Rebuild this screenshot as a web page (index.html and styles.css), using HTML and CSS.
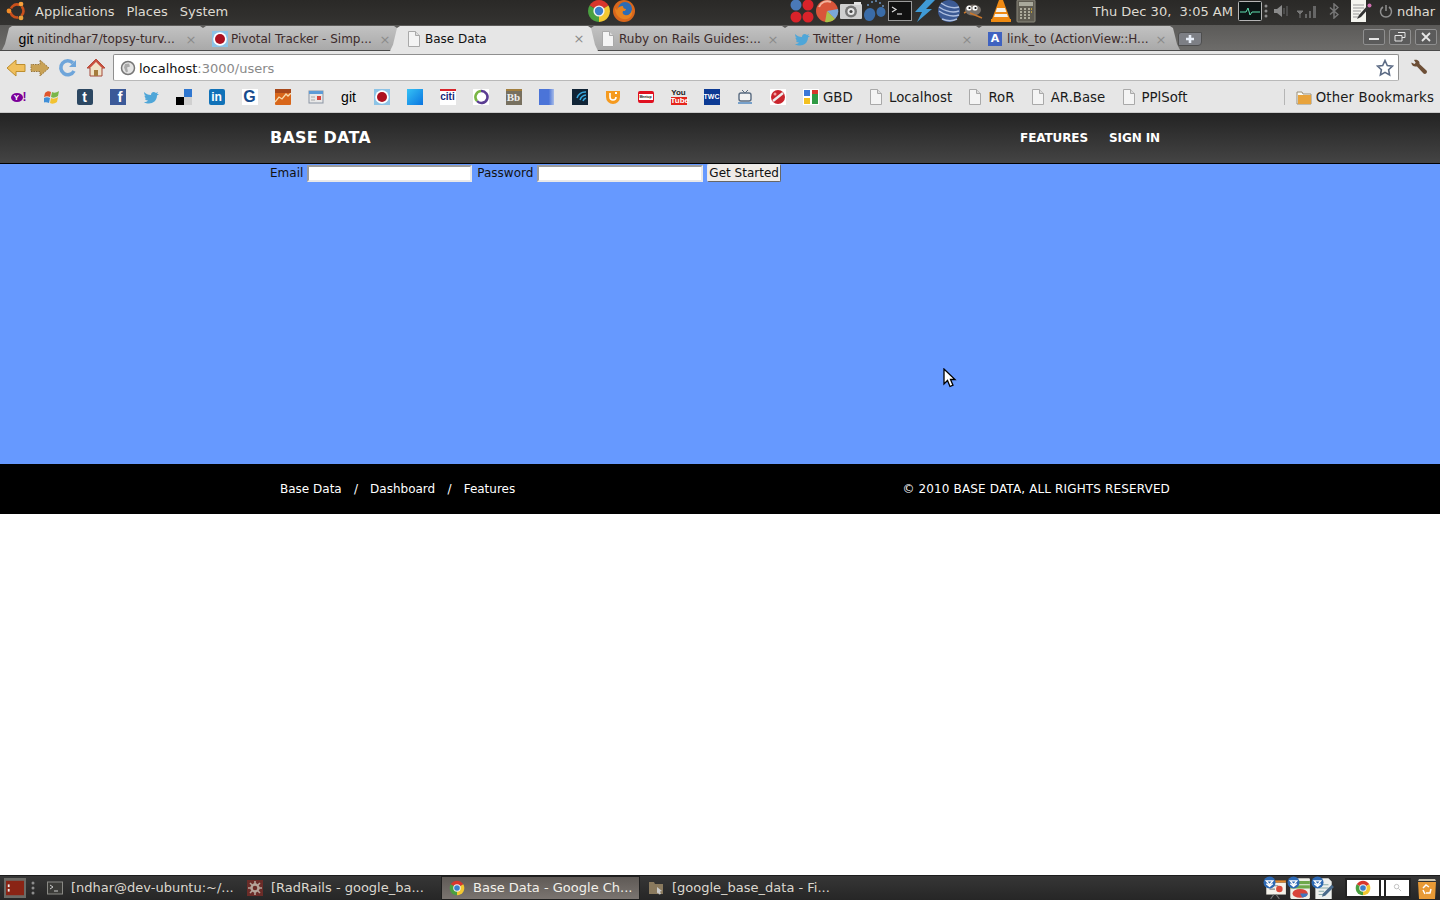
FILE: index.html
```html
<!DOCTYPE html>
<html lang="en">
<head>
    <meta charset="UTF-8">
    <title>Base Data - Google Chrome</title>
    <link rel="stylesheet" href="styles.css">
</head>
<body>
<svg class="defs">
    <symbol id="page" viewBox="0 0 16 16"><path d="M2.500.5h7l4 4v11h-11z" fill="#f4f4f4" stroke="#a9a9a9"/><path d="M9.500.5v4h4" fill="#dcdcdc" stroke="#a9a9a9"/></symbol>
    <symbol id="chrome" viewBox="0 0 24 24"><path d="M12 12 2.500 6.500A11 11 0 0 1 21.500 6.500z" fill="#d8362c"/><path d="M12 12 2.500 6.500A11 11 0 0 0 12 23z" fill="#4aa040"/><path d="M12 12V23A11 11 0 0 0 21.500 6.500z" fill="#f3c832"/><circle cx="12" cy="12" r="5.600" fill="#f2f2f2"/><circle cx="12" cy="12" r="4.200" fill="#3c7ecb"/></symbol>
    <symbol id="bird" viewBox="0 0 16 16"><path d="M1 3c2 2 4 3 7 3 0-3 3-4 5-2l2-1-1 2h2l-2 1.500c0 5-4 8-8 8-2 0-4-.5-5-1.500 2 0 3-.5 4-1.500-2 0-3-1-3-2h1.500C2 9 1.500 7.500 1.500 6.500l1.500.5C1.500 6 1 4.500 1 3z" fill="#4fa6d8"/></symbol>
    <symbol id="pivotal" viewBox="0 0 16 16"><rect width="16" height="16" fill="#8cc3e6"/><circle cx="8" cy="8" r="6.800" fill="#fff"/><circle cx="8" cy="8" r="5" fill="#ad1120"/></symbol>
    <symbol id="updates" viewBox="0 0 22 22"><circle cx="6" cy="6" r="5.500" fill="#2d69b4"/><path d="M3 4.500h6L6 8zM3 7l3 2.500L9 7" fill="none" stroke="#fff" stroke-width="1.200"/></symbol>
</svg>

<div class="panel">
    <svg class="logo" viewBox="0 0 22 22"><circle cx="11" cy="11" r="6.500" fill="none" stroke="#c9501c" stroke-width="2.600" stroke-dasharray="10 3.600" transform="rotate(-44 11 11)"/><circle cx="3" cy="11" r="2.400" fill="#f28c28"/><circle cx="15" cy="4.100" r="2.400" fill="#f7a13c"/><circle cx="15" cy="17.900" r="2.400" fill="#e9a23b"/></svg>
    <span class="menu">Applications</span>
    <span class="menu">Places</span>
    <span class="menu">System</span>

    <div class="launchers">
        <svg class="panel-icon"><use href="#chrome"/></svg>
        <svg class="panel-icon" viewBox="0 0 24 24"><circle cx="12" cy="12" r="11" fill="#d9671c"/><circle cx="13" cy="10" r="7" fill="#2d6cb5"/><path d="M3 9c0 8 6 12 12 11 4-1 6-5 5-9-1 4-4 6-7 5-2-.5-3-2-2-4 2 .5 3-1 3-2-2 0-3-1-3-3-3 0-5 1-6 4z" fill="#e8821f"/></svg>
    </div>

    <div class="launchers launchers-apps">
        <svg class="panel-icon" viewBox="0 0 24 24"><circle cx="6" cy="6" r="5.500" fill="#4a79b8"/><circle cx="18" cy="6" r="5.500" fill="#d8232a"/><circle cx="6" cy="18" r="5.500" fill="#d8232a"/><circle cx="18" cy="18" r="5.500" fill="#d8232a"/></svg>
        <svg class="panel-icon" viewBox="0 0 24 24"><circle cx="12" cy="12" r="11" fill="#d9553a"/><path d="M12 12 23 10A11 11 0 0 1 20 20z" fill="#7aa7d8"/><path d="M12 12 20 20A11 11 0 0 1 10 23z" fill="#a9c24a"/><path d="M4 8a9 9 0 0 1 12-5" fill="none" stroke="#f2b29c" stroke-width="2"/></svg>
        <svg class="panel-icon" viewBox="0 0 24 24"><rect x="1" y="5" width="22" height="15" rx="1" fill="#cfcfcf"/><rect x="15" y="3" width="7" height="3" fill="#e2e2e2"/><circle cx="12" cy="12.500" r="6" fill="#777"/><circle cx="12" cy="12.500" r="3.500" fill="#e8e8e8"/><circle cx="12" cy="12.500" r="1.600" fill="#444"/></svg>
        <svg class="panel-icon" viewBox="0 0 24 24"><path d="M7 9c4 0 6 4 5 8-1 3-3 5-6 5s-5-3-5-6c0-4 3-7 6-7z" fill="#3a6ca8"/><ellipse cx="18" cy="13" rx="4.500" ry="5" fill="#3a6ca8"/><g fill="#6d93bd"><circle cx="5" cy="6" r="1"/><circle cx="9" cy="3" r="1"/><circle cx="13" cy="2" r="1"/><circle cx="17" cy="4" r="1"/><circle cx="20" cy="7" r="1"/></g></svg>
        <svg class="panel-icon" viewBox="0 0 24 24"><rect x=".5" y="2.500" width="23" height="19" fill="#111" stroke="#9a9a9a"/><path d="M4 8l4 2.500L4 13" fill="none" stroke="#ddd" stroke-width="1.200"/><path d="M9 15h5" stroke="#ddd" stroke-width="1.200"/></svg>
        <svg class="panel-icon" viewBox="0 0 24 24"><path d="M14 1h9l-9 9h6L5 23l5-10H3z" fill="#3f9ad6"/></svg>
        <svg class="panel-icon" viewBox="0 0 24 24"><circle cx="12" cy="12" r="11" fill="#3c5a94"/><path d="M2 8c6 4 14 6 20 4M2 12c6 4 14 6 20 4M4 4c6 4 12 6 18 4M5 20c5 2 11 2 15 0" fill="none" stroke="#aebfe0" stroke-width="1.500"/></svg>
        <svg class="panel-icon gap-gimp" viewBox="0 0 24 24"><ellipse cx="11" cy="11" rx="8" ry="5.500" fill="#77706a"/><circle cx="7" cy="9" r="2.600" fill="#fff"/><circle cx="13" cy="9" r="2.600" fill="#fff"/><circle cx="7.500" cy="9" r="1.100" fill="#111"/><circle cx="13.500" cy="9" r="1.100" fill="#111"/><path d="M4 13l-2 1M8 14l12 5" stroke="#c9762b" stroke-width="1.500"/></svg>
        <svg class="panel-icon gap-vlc" viewBox="0 0 24 24"><path d="M10 1h4l7 19H3z" fill="#f08a14"/><path d="M8 9h8l1.300 4H6.700zM6 15h12l1 3H5z" fill="#f4f1ea"/><rect x="2" y="20" width="20" height="3" fill="#ee8a12"/></svg>
        <svg class="panel-icon" viewBox="0 0 24 24"><rect x="3" y="1" width="18" height="22" rx="1" fill="#5f5c52" stroke="#8b887c"/><rect x="5" y="3" width="14" height="4" fill="#a9a99c"/><path d="M6 10h2M10 10h2M14 10h2M6 13h2M10 13h2M14 13h2M6 16h2M10 16h2M14 16h2M6 19h2M10 19h2M14 19h2" stroke="#c9c6b6" stroke-width="1.500"/><path d="M17 10h1M17 13h1" stroke="#d8b33a" stroke-width="1.500"/></svg>
    </div>

    <span class="clock">Thu Dec 30,&nbsp; 3:05 AM</span>

    <svg class="panel-icon tray-monitor" viewBox="0 0 24 20"><rect x=".5" y=".5" width="23" height="19" rx="1" fill="#0c1414" stroke="#b5b5b5"/><path d="M2 11h6l2-4 2 7 2-3h8" fill="none" stroke="#5fe0b0"/></svg>
    <svg class="tray-dots" viewBox="0 0 4 14"><circle cx="2" cy="2" r="1.500" fill="#8d8d8d"/><circle cx="2" cy="7" r="1.500" fill="#8d8d8d"/><circle cx="2" cy="12" r="1.500" fill="#8d8d8d"/></svg>
    <svg class="tray-volume" viewBox="0 0 16 16"><path d="M1 6h3l5-4v12l-5-4H1z" fill="#8a8a8a"/><path d="M11 5v6M14 3v10" stroke="#555" stroke-width="1.500"/></svg>
    <svg class="tray-signal" viewBox="0 0 22 16"><path d="M1 8h6L4 11zM4 10v5" fill="#777" stroke="#777"/><path d="M9 11h2v4H9zM13 8h2v7h-2zM17 3h3v12h-3z" fill="#666"/></svg>
    <svg class="tray-bt" viewBox="0 0 10 16"><path d="M1 4.500l8 7-4 3.500V1l4 3.500-8 7" fill="none" stroke="#777" stroke-width="1.500"/></svg>
    <svg class="tray-note" viewBox="0 0 22 24"><path d="M1 1h15v22H1z" fill="#f4f4ee"/><path d="M3 6h11M3 9h11M3 12h8M3 15h6M3 18h5" stroke="#999"/><path d="M7 20l2-4 9-10 2 2-9 10z" fill="#333"/><circle cx="19.500" cy="6.500" r="2" fill="#d070b0"/></svg>
    <svg class="tray-power" viewBox="0 0 14 14"><path d="M4 3a5.500 5.500 0 1 0 6 0M7 1v6" fill="none" stroke="#8f8f8f" stroke-width="1.500"/></svg>
    <span class="user">ndhar</span>
</div>

<div class="tabstrip">
    <div class="tab">
        <span class="fav-git">git</span>
        <span class="tab-title">nitindhar7/topsy-turv...</span>
        <span class="tab-close">×</span>
    </div>
    <div class="tab">
        <svg class="fav"><use href="#pivotal"/></svg>
        <span class="tab-title">Pivotal Tracker - Simp...</span>
        <span class="tab-close">×</span>
    </div>
    <div class="tab tab-active">
        <svg class="fav"><use href="#page"/></svg>
        <span class="tab-title">Base Data</span>
        <span class="tab-close">×</span>
    </div>
    <div class="tab">
        <svg class="fav"><use href="#page"/></svg>
        <span class="tab-title">Ruby on Rails Guides:...</span>
        <span class="tab-close">×</span>
    </div>
    <div class="tab">
        <svg class="fav"><use href="#bird"/></svg>
        <span class="tab-title">Twitter / Home</span>
        <span class="tab-close">×</span>
    </div>
    <div class="tab">
        <span class="fav-a">A</span>
        <span class="tab-title">link_to (ActionView::H...</span>
        <span class="tab-close">×</span>
    </div>
    <div class="tab-new"><svg viewBox="0 0 10 10"><path d="M5 1v8M1 5h8" stroke="#e8eef8" stroke-width="2.600"/></svg></div>
    <div class="win-buttons">
        <div class="win-btn"><svg viewBox="0 0 12 12"><path d="M1 8h10" stroke="#e6e6e6" stroke-width="2"/></svg></div>
        <div class="win-btn"><svg viewBox="0 0 12 12"><path d="M4 1.500h7v5H8M1 4.500h7v5.500H1z" fill="none" stroke="#e6e6e6"/></svg></div>
        <div class="win-btn"><svg viewBox="0 0 12 12"><path d="M2 2l8 8M10 2l-8 8" stroke="#e6e6e6" stroke-width="1.800"/></svg></div>
    </div>
</div>

<div class="toolbar">
    <svg class="tool tool-back" viewBox="0 0 20 20"><path d="M1 10l9-8v4.500h9v7h-9V18z" fill="#f0bf5c" stroke="#bd8e2f"/></svg>
    <svg class="tool" viewBox="0 0 20 20"><path d="M19 10l-9-8v4.500H1v7h9V18z" fill="#c9a256" stroke="#98763a" stroke-dasharray="1.500 1"/></svg>
    <svg class="tool" viewBox="0 0 20 20"><path d="M16 13a7 7 0 1 1-1-8" fill="none" stroke="#6ea5da" stroke-width="3.600"/><path d="M18 2v7h-7z" fill="#6ea5da"/></svg>
    <svg class="tool" viewBox="0 0 20 20"><path d="M10 1 1 10h3v8h12v-8h3z" fill="#efe3c8" stroke="#a5493a"/><path d="M10 1 1 10h3l6-6 6 6h3z" fill="#c9513f"/><rect x="8" y="12" width="4" height="6" fill="#a57c3d"/></svg>
    <div class="omnibox">
        <svg class="globe" viewBox="0 0 16 16"><circle cx="8" cy="8" r="6.500" fill="#e4e4e4" stroke="#777" stroke-width="1.500"/><path d="M5 4l4-.5 1 3-3 1 1 4-2 1-2-5z" fill="#aaa"/></svg>
        <span class="url">localhost<span class="url-rest">:3000/users</span></span>
        <svg class="star" viewBox="0 0 18 18"><path d="M9 1.500l2.300 5 5.200.6-3.900 3.600 1 5.300L9 13.400 4.400 16l1-5.300L1.500 7.100l5.200-.6z" fill="#fff" stroke="#5c6b85" stroke-width="1.600"/></svg>
    </div>
    <svg class="wrench" viewBox="0 0 18 18"><path d="M1.500 3.500 4.500 5l1.200-1.300L4 1c3-1 6 1 5.500 4l7 6.500c1.500 2-1 4.500-3 3l-6.500-7C4 8 1 6 1.500 3.500z" fill="#6d4f37"/></svg>
</div>

<div class="bookmarks">
    <span class="bm"><span class="fav-yahoo"><span class="yahoo-oval">Y</span>!</span></span>
    <span class="bm"><svg class="fav" viewBox="0 0 16 16"><path d="M1 4c2-2 4-2 6-1L6 8C4 7 2 7 0 8z" fill="#e0552b"/><path d="M8 3c2 1 4 1 7-1l-1 5c-3 2-5 2-7 1z" fill="#7ab648"/><path d="M0 9c2-1 4-1 6 0l-1 5c-2-1-4-1-6 0z" fill="#3f8fd8"/><path d="M7 9c2 1 4 1 7-1l-1 5c-3 2-5 2-7 1z" fill="#f2c230"/></svg></span>
    <span class="bm"><span class="fav-text fav-tumblr">t</span></span>
    <span class="bm"><span class="fav-text fav-fb">f</span></span>
    <span class="bm"><svg class="fav"><use href="#bird"/></svg></span>
    <span class="bm"><svg class="fav" viewBox="0 0 16 16"><rect x="8" width="8" height="8" fill="#2f77d0"/><rect y="8" width="8" height="8"/><rect x="8" y="8" width="8" height="8" fill="#d0d0d0"/></svg></span>
    <span class="bm"><span class="fav-text fav-in">in</span></span>
    <span class="bm"><span class="fav-text fav-g">G</span></span>
    <span class="bm"><svg class="fav" viewBox="0 0 16 16"><rect width="16" height="16" rx="1" fill="#d8661a"/><path d="M0 13l4-5 3 2 4-5 2 2 3-3" fill="none" stroke="#f8dcae" stroke-width="1.300"/><rect width="16" height="4" fill="#a8481a"/></svg></span>
    <span class="bm"><svg class="fav" viewBox="0 0 16 16"><rect x="1" y="2" width="14" height="12" fill="#e8e8e8" stroke="#8b95a3"/><rect x="1" y="2" width="14" height="3" fill="#5d9bd6"/><rect x="9" y="7" width="4" height="4" fill="#d8443c"/><path d="M3 8h4M3 11h4" stroke="#aaa"/></svg></span>
    <span class="bm"><span class="fav-git">git</span></span>
    <span class="bm"><svg class="fav"><use href="#pivotal"/></svg></span>
    <span class="bm"><span class="fav-square"></span></span>
    <span class="bm"><span class="fav-text fav-citi">citi</span></span>
    <span class="bm"><svg class="fav" viewBox="0 0 16 16"><rect width="16" height="16" fill="#fff"/><path d="M8 2a6 6 0 1 1-4 10" fill="none" stroke="#5a3d92" stroke-width="2.600"/><path d="M8 2a6 6 0 0 0-4 10" fill="none" stroke="#79b544" stroke-width="2.600"/></svg></span>
    <span class="bm"><span class="fav-text fav-bb">Bb</span></span>
    <span class="bm"><span class="fav-gloss"></span></span>
    <span class="bm"><svg class="fav" viewBox="0 0 16 16"><rect width="16" height="16" fill="#102436"/><path d="M14 3a9 9 0 0 0-9 6M14 6a7 7 0 0 0-6 5M14 9a5 5 0 0 0-3 3" fill="none" stroke="#38a8de" stroke-width="1.500"/></svg></span>
    <span class="bm"><svg class="fav" viewBox="0 0 16 16"><path d="M1 2h14v6a7 7 0 0 1-14 0z" fill="#f59a1f"/><path d="M5 4v4a3 3 0 0 0 6 0" fill="none" stroke="#fff" stroke-width="1.600"/><path d="M11 3v2" stroke="#fff" stroke-width="2"/></svg></span>
    <span class="bm"><span class="fav-text fav-meetup">Meetup</span></span>
    <span class="bm"><span class="fav-yt"><span class="yt-you">You</span><span class="yt-tube">Tube</span></span></span>
    <span class="bm"><span class="fav-text fav-twc">TWC</span></span>
    <span class="bm"><svg class="fav" viewBox="0 0 16 16"><rect x="2" y="4" width="12" height="8" rx="2" fill="#f2f2f2" stroke="#596b80" stroke-width="1.400"/><path d="M5 1l3 3 3-3" fill="none" stroke="#596b80"/><path d="M1 14h14" stroke="#5a8fc4" stroke-width="1.600"/></svg></span>
    <span class="bm"><svg class="fav" viewBox="0 0 16 16"><rect width="16" height="16" fill="#fff"/><circle cx="8" cy="8" r="7" fill="#c9242c"/><path d="M3 12 13 4" stroke="#eee" stroke-width="2.400"/><circle cx="5" cy="5" r="1.500" fill="#f3a0a0"/></svg></span>
    <span class="bm-link bm-first">
        <svg class="fav" viewBox="0 0 16 16"><rect width="16" height="16" fill="#fff"/><rect x="1" y="1" width="6" height="6" fill="#3b78d8"/><rect x="9" y="1" width="6" height="6" fill="#d8362c"/><rect x="1" y="9" width="6" height="6" fill="#f3c01f"/><rect x="9" y="5" width="6" height="10" fill="#2f9a44"/></svg>
        GBD
    </span>
    <span class="bm-link"><svg class="fav"><use href="#page"/></svg>Localhost</span>
    <span class="bm-link"><svg class="fav"><use href="#page"/></svg>RoR</span>
    <span class="bm-link"><svg class="fav"><use href="#page"/></svg>AR.Base</span>
    <span class="bm-link"><svg class="fav"><use href="#page"/></svg>PPlSoft</span>
    <span class="bm-other">
        <svg class="fav" viewBox="0 0 16 16"><path d="M1 3h5l1 2h8v10H1z" fill="#fbfbf5" stroke="#9a8f78"/><rect x="2" y="6" width="13" height="9" fill="#e8a33c"/></svg>
        Other Bookmarks
    </span>
</div>

<div class="page">
    <div class="site-nav">
        <div class="wrap nav-row">
            <a class="brand">BASE DATA</a>
            <div class="nav-links">
                <a>FEATURES</a>
                <a>SIGN IN</a>
            </div>
        </div>
    </div>
    <div class="hero">
        <form class="wrap signin">
            <label for="email">Email</label>
            <input type="text" id="email">
            <label for="password">Password</label>
            <input type="text" id="password">
            <button type="button">Get Started</button>
        </form>
    </div>
    <div class="site-footer">
        <div class="wrap footer-row">
            <div class="footer-links">
                <a>Base Data</a><span>/</span><a>Dashboard</a><span>/</span><a>Features</a>
            </div>
            <span class="copyright">© 2010 BASE DATA, ALL RIGHTS RESERVED</span>
        </div>
    </div>
    <svg class="cursor" viewBox="0 0 14 20"><path d="M1 1v15l3.500-3.500L7 18.500l3-1.300-2.500-5.700H12z" fill="#fff" stroke="#000" stroke-width="1.300"/></svg>
</div>

<div class="taskbar">
    <div class="show-desktop"><svg viewBox="0 0 20 16"><rect width="20" height="16" fill="#8a2415"/><rect x="2" y="4" width="2" height="3" fill="#eee"/><rect x="2" y="9" width="2" height="3" fill="#eee"/></svg></div>
    <svg class="tray-dots task-handle" viewBox="0 0 4 14"><circle cx="2" cy="2" r="1.500" fill="#8d8d8d"/><circle cx="2" cy="7" r="1.500" fill="#8d8d8d"/><circle cx="2" cy="12" r="1.500" fill="#8d8d8d"/></svg>
    <div class="task">
        <svg class="fav" viewBox="0 0 16 16"><rect x=".5" y="2" width="15" height="12" fill="#3b3b38" stroke="#8a8a85"/><path d="M3 5l3 2-3 2M7 11h4" fill="none" stroke="#ccc"/></svg>
        [ndhar@dev-ubuntu:~/...
    </div>
    <div class="task">
        <svg class="fav" viewBox="0 0 16 16"><rect width="16" height="16" fill="#6b2c28"/><circle cx="8" cy="8" r="3.500" fill="none" stroke="#b5a59a" stroke-width="2.400"/><path d="M8 1v3M8 12v3M1 8h3M12 8h3M3 3l2 2M11 11l2 2M13 3l-2 2M5 11l-2 2" stroke="#b5a59a" stroke-width="1.600"/></svg>
        [RadRails - google_ba...
    </div>
    <div class="task task-active">
        <svg class="fav"><use href="#chrome"/></svg>
        Base Data - Google Ch...
    </div>
    <div class="task">
        <svg class="fav" viewBox="0 0 16 16"><path d="M1 2h5l1 2h8v10H1z" fill="#8a7a5e"/><path d="M9 7l5 4-2 .5 1 2.500-2 .5-1-2-1 1z" fill="#ccc"/></svg>
        [google_base_data - Fi...
    </div>
    <div class="task-tray">
        <span class="tray-app">
            <svg class="tray-app-icon" viewBox="0 0 22 22"><path d="M3 6h18v11H3z" fill="#f4f2ea"/><path d="M3 5h18" stroke="#e2872c" stroke-width="2"/><path d="M6 9h8M6 12h5" stroke="#888"/><path d="M10 17 7 21M12 17l3 4" stroke="#777"/><circle cx="15" cy="12" r="3" fill="#d84a3a"/><use href="#updates"/></svg>
        </span>
        <span class="tray-app">
            <svg class="tray-app-icon" viewBox="0 0 22 22"><rect x="3" y="2" width="18" height="19" rx="1" fill="#eef0e8"/><path d="M3 6h18M3 10h18" stroke="#6da84a" stroke-width="3"/><ellipse cx="12" cy="16" rx="7" ry="4" fill="#d8443a"/><path d="M12 16h7a7 4 0 0 1-5 3.800z" fill="#3d78c0"/><use href="#updates"/></svg>
        </span>
        <span class="tray-app">
            <svg class="tray-app-icon" viewBox="0 0 22 22"><path d="M4 2h12l3 3v16H4z" fill="#eef0ee"/><path d="M7 8h9M7 11h9M7 14h5M7 17h4" stroke="#8aa"/><path d="M10 19l1-3 8-8 2 2-8 8z" fill="#4a6a8a"/><use href="#updates"/></svg>
        </span>
        <div class="workspaces">
            <span class="ws ws-current"><svg class="fav-ws"><use href="#chrome"/></svg></span>
            <span class="ws ws-thin"></span>
            <span class="ws"><svg class="search" viewBox="0 0 10 10"><circle cx="4" cy="4" r="2.500" fill="none" stroke="#bbb"/><path d="M6 6l3 3" stroke="#bbb"/></svg></span>
        </div>
        <svg class="trash" viewBox="0 0 22 24"><path d="M3 3h16l1 2H2z" fill="#c9c2ae"/><path d="M2 6h18l-1 17H3z" fill="#e89a36"/><path d="M7 12l3-3 3 2M15 13l-1 4h-4M7 14l2 4" fill="none" stroke="#fff" stroke-width="1.500"/></svg>
    </div>
</div>
</body>
</html>
```

FILE: styles.css
```css
*{
    box-sizing: border-box;
}
html, body{
    height: 100%;
}
body{
    margin: 0;
    display: flex;
    flex-direction: column;
    overflow: hidden;
    font-family: "DejaVu Sans", sans-serif;
    font-size: 13px;
    background: #fff;
    color: #111;
}
.defs{
    display: none;
}

/* top gnome panel */
.panel{
    height: 25px;
    flex: none;
    display: flex;
    align-items: center;
    padding: 0 0 3px 6px;
    background: linear-gradient(#2a2927, #343331);
    color: #dfdbd2;
}
.panel svg{
    flex: none;
}
.logo{
    width: 22px;
    height: 22px;
    margin-right: 7px;
}
.menu{
    margin-right: 12px;
}
.panel-icon{
    width: 24px;
    height: 24px;
    display: block;
}
.launchers{
    display: flex;
    margin-left: 347px;
    gap: 1px;
}
.launchers-apps{
    margin-left: 154px;
    gap: 0.4px;
}
.gap-gimp{
    margin-left: 1px;
}
.gap-vlc{
    margin-left: 3px;
}
.clock{
    margin-left: 55px;
    white-space: nowrap;
}
.tray-monitor{
    margin-left: 5px;
    height: 20px;
}
.tray-dots{
    width: 4px;
    height: 14px;
    margin-left: 2px;
}
.tray-volume{
    width: 16px;
    height: 16px;
    margin-left: 5px;
}
.tray-signal{
    width: 22px;
    height: 16px;
    margin-left: 7px;
}
.tray-bt{
    width: 10px;
    height: 16px;
    margin-left: 11px;
}
.tray-note{
    width: 22px;
    height: 24px;
    margin-left: 11px;
}
.tray-power{
    width: 14px;
    height: 14px;
    margin-left: 7px;
}
.user{
    margin-left: 4px;
}

/* chrome tabs */
.tabstrip{
    height: 26px;
    flex: none;
    display: flex;
    align-items: flex-end;
    padding-left: 2px;
    background: linear-gradient(#5b5a58, #6d6c6a);
    border-bottom: 1px solid #4b4b4b;
}
.tab{
    width: 208px;
    height: 24px;
    flex: none;
    margin-right: -14px;
    padding: 2px 12px 0 16px;
    display: flex;
    align-items: center;
    background: linear-gradient(#c2c2c2, #a9a9a9);
    clip-path: polygon(0 100%, 3px 75%, 7px 8%, 10px 0, 198px 0, 201px 8%, 205px 75%, 208px 100%);
    color: #3c2a2a;
    font-size: 12px;
}
.tab-active{
    height: 25px;
    padding-top: 0;
    background: #e6e6e6;
    color: #111;
    z-index: 2;
    margin-bottom: -1px;
}
.tab-title{
    margin-left: 3px;
    flex: 1;
    white-space: nowrap;
}
.tab-close{
    color: #8b8b8b;
    font-size: 13px;
    width: 12px;
    text-align: center;
    margin-right: 1px;
}
.fav{
    width: 16px;
    height: 16px;
    flex: none;
    display: block;
}
.fav-git{
    width: 16px;
    flex: none;
    font-family: "Liberation Sans", sans-serif;
    font-size: 14px;
    color: #000;
    text-align: center;
    line-height: 16px;
}
.fav-a{
    width: 14px;
    height: 14px;
    margin-right: 2px;
    background: #3f62c0;
    color: #fff;
    font-size: 11px;
    font-weight: bold;
    line-height: 14px;
    text-align: center;
}
.tab-new{
    width: 24px;
    height: 14px;
    margin: 0 0 4px 12px;
    background: #7d7f85;
    border: 1px solid #4e4e4e;
    border-top-left-radius: 3px;
    border-bottom-right-radius: 4px;
    display: flex;
    justify-content: center;
    align-items: center;
    flex: none;
}
.tab-new svg{
    width: 10px;
    height: 10px;
}
.win-buttons{
    margin-left: auto;
    margin-right: 3px;
    margin-bottom: 5px;
    display: flex;
    gap: 4px;
}
.win-btn{
    width: 22px;
    height: 16px;
    border: 1px solid #8f8f8f;
    border-radius: 2px;
    background: #5b5b5b;
    display: flex;
    align-items: center;
    justify-content: center;
}
.win-btn svg{
    width: 12px;
    height: 12px;
}

/* location bar */
.toolbar{
    height: 33px;
    flex: none;
    display: flex;
    align-items: center;
    gap: 8px;
    padding-left: 6px;
    background: #e6e6e6;
}
.tool{
    width: 20px;
    height: 20px;
    flex: none;
}
.tool-back{
    margin-right: -4px;
}
.omnibox{
    width: 1286px;
    height: 27px;
    margin-left: -1px;
    padding: 0 4px 0 6px;
    display: flex;
    align-items: center;
    background: #fff;
    border: 1px solid #8f8f8f;
    border-bottom-color: #b9b9b9;
    border-radius: 2px;
}
.globe{
    width: 16px;
    height: 16px;
}
.url{
    margin-left: 3px;
    padding-top: 2px;
    flex: 1;
}
.url-rest{
    color: #8a8a8a;
}
.star{
    width: 18px;
    height: 18px;
}
.wrench{
    width: 18px;
    height: 18px;
    margin-left: 3px;
}

/* bookmarks */
.bookmarks{
    height: 29px;
    flex: none;
    display: flex;
    align-items: center;
    padding: 0 0 2px 2px;
    background: #e6e6e6;
    border-bottom: 1px solid #c8c8c8;
    color: #1a1a1a;
    font-size: 13.3px;
}
.bm{
    width: 33px;
    flex: none;
    display: flex;
    justify-content: center;
}
.bm-link{
    display: flex;
    align-items: center;
    gap: 5px;
    margin-left: 15.3px;
    white-space: nowrap;
}
.bm-first{
    gap: 4px;
    margin-left: 9px;
}
.bm-other{
    display: flex;
    align-items: center;
    gap: 4px;
    margin-left: auto;
    padding-left: 11px;
    padding-right: 6px;
    border-left: 1px solid #b5b5b5;
    white-space: nowrap;
    letter-spacing: .13px;
}
.fav-text{
    width: 16px;
    height: 16px;
    display: block;
    text-align: center;
    line-height: 16px;
    font-family: "Liberation Sans", sans-serif;
    font-weight: bold;
}
.fav-yahoo{
    width: 16px;
    height: 16px;
    display: flex;
    align-items: center;
    color: #7b0099;
    font-family: "Liberation Sans", sans-serif;
    font-weight: bold;
    font-size: 12px;
}
.yahoo-oval{
    width: 12px;
    height: 9px;
    border-radius: 50%;
    background: #7b0099;
    color: #fff;
    font-size: 8px;
    line-height: 9px;
    text-align: center;
}
.fav-tumblr{
    background: #2c4762;
    color: #fff;
    border-radius: 2px;
    font-size: 14px;
}
.fav-fb{
    background: #3b5998;
    color: #fff;
    font-size: 15px;
    text-align: right;
    padding-right: 3px;
}
.fav-in{
    background: #1172b8;
    color: #fff;
    font-size: 12px;
    border-radius: 2px;
}
.fav-g{
    background: #fff;
    color: #174a8c;
    font-size: 16px;
}
.fav-square{
    width: 16px;
    height: 16px;
    background: linear-gradient(135deg, #35c2f5, #0a74e0);
}
.fav-citi{
    background: #fff;
    color: #12287a;
    font-size: 10px;
    line-height: 12px;
    border-top: 2px solid #d8232a;
}
.fav-bb{
    background: #77705f;
    color: #eee;
    font-family: "Liberation Serif", serif;
    font-size: 11px;
    line-height: 13px;
    border-top: 2px solid #a27f3f;
}
.fav-gloss{
    width: 15px;
    height: 16px;
    background: linear-gradient(90deg, #4b74d8 65%, #a9bde8);
}
.fav-meetup{
    height: 12px;
    background: #fff;
    color: #111;
    font-size: 3.500px;
    line-height: 6px;
    border: solid #e01020;
    border-width: 3px 1px;
    border-radius: 2px;
}
.fav-yt{
    width: 16px;
    height: 16px;
    display: flex;
    flex-direction: column;
    align-items: center;
    font-family: "Liberation Sans", sans-serif;
    font-size: 8px;
    font-weight: bold;
    line-height: 8px;
}
.yt-you{
    color: #222;
}
.yt-tube{
    width: 16px;
    background: #e5261c;
    color: #fff;
    text-align: center;
}
.fav-twc{
    background: #0c3a94;
    color: #fff;
    font-size: 7px;
}

/* the site itself */
.page{
    flex: 1;
    background: #fff;
}
.wrap{
    width: 900px;
    margin: 0 auto;
}
.site-nav{
    height: 51px;
    background: linear-gradient(#232323, #444);
    border-bottom: 1px solid #000;
    color: #fff;
    font-weight: bold;
}
.nav-row{
    height: 50px;
    display: flex;
    align-items: center;
    justify-content: space-between;
}
.brand{
    font-size: 16px;
    letter-spacing: .2px;
    padding-bottom: 1px;
}
.nav-links{
    display: flex;
    gap: 21px;
    padding-right: 10px;
    font-size: 12px;
    letter-spacing: -.1px;
}
.hero{
    height: 300px;
    background: #6699ff;
    color: #111;
    font-size: 12px;
}
.signin{
    display: flex;
    align-items: flex-start;
}
.signin label{
    margin-right: 4px;
    line-height: 18px;
}
.signin input{
    width: 165px;
    height: 17px;
    margin: 1px 5px 0 0;
    padding: 0 2px;
    background: #fff;
    border: 2px solid;
    border-color: #9c9c9c #e9e9e9 #e9e9e9 #9c9c9c;
}
.signin #password{
    width: 166px;
}
.signin button{
    height: 18px;
    margin-left: -1px;
    padding: 0 1px;
    background: #efebe7;
    border: 1px solid #6d6d6d;
    border-color: #e8e8e8 #666 #666 #e8e8e8;
    border-radius: 2px;
    font-family: inherit;
    font-size: 12px;
    color: #111;
}
.site-footer{
    height: 50px;
    background: #000;
    color: #fff;
    font-size: 12px;
}
.footer-row{
    height: 50px;
    display: flex;
    align-items: center;
    justify-content: space-between;
    padding-left: 10px;
}
.footer-links{
    display: flex;
    gap: 12.2px;
}
.copyright{
    letter-spacing: .14px;
}
.cursor{
    position: absolute;
    left: 943px;
    top: 368px;
    width: 14px;
    height: 20px;
}

/* bottom gnome panel */
.taskbar{
    height: 25px;
    flex: none;
    display: flex;
    align-items: center;
    padding: 0 0 1px 4px;
    background: linear-gradient(#363636, #262626);
    border-top: 1px solid #1c1c1c;
    color: #dcd8cf;
}
.taskbar svg, .show-desktop{
    flex: none;
}
.show-desktop{
    width: 22px;
    height: 20px;
    padding: 2px;
    background: #6b6a66;
}
.show-desktop svg{
    display: block;
    width: 18px;
    height: 16px;
}
.task-handle{
    margin-left: 5px;
    margin-right: 4px;
}
.task{
    width: 200px;
    height: 24px;
    flex: none;
    padding-left: 8px;
    display: flex;
    align-items: center;
    gap: 8px;
    white-space: nowrap;
}
.task-active{
    width: 199px;
    margin-left: 2px;
    padding-left: 7px;
    background: linear-gradient(#5f5a56, #7a7470);
    border: 1px solid #1f1f1f;
    color: #f2f0ea;
}
.task-tray{
    margin-left: auto;
    display: flex;
    align-items: center;
}
.tray-app{
    width: 24px;
    height: 24px;
}
.tray-app-icon{
    width: 24px;
    height: 24px;
    display: block;
}
.workspaces{
    margin-left: 10px;
    width: 66px;
    height: 20px;
    display: flex;
    gap: 2px;
    background: #222;
    border: 2px solid #222;
}
.ws{
    flex: 1;
    background: #fff;
    display: flex;
    align-items: center;
    justify-content: center;
}
.ws-current{
    flex: none;
    width: 32px;
}
.ws-thin{
    flex: none;
    width: 3px;
}
.fav-ws{
    width: 16px;
    height: 16px;
}
.search{
    width: 9px;
    height: 9px;
}
.trash{
    width: 22px;
    height: 24px;
    margin: 0 2px 0 5px;
}
```
